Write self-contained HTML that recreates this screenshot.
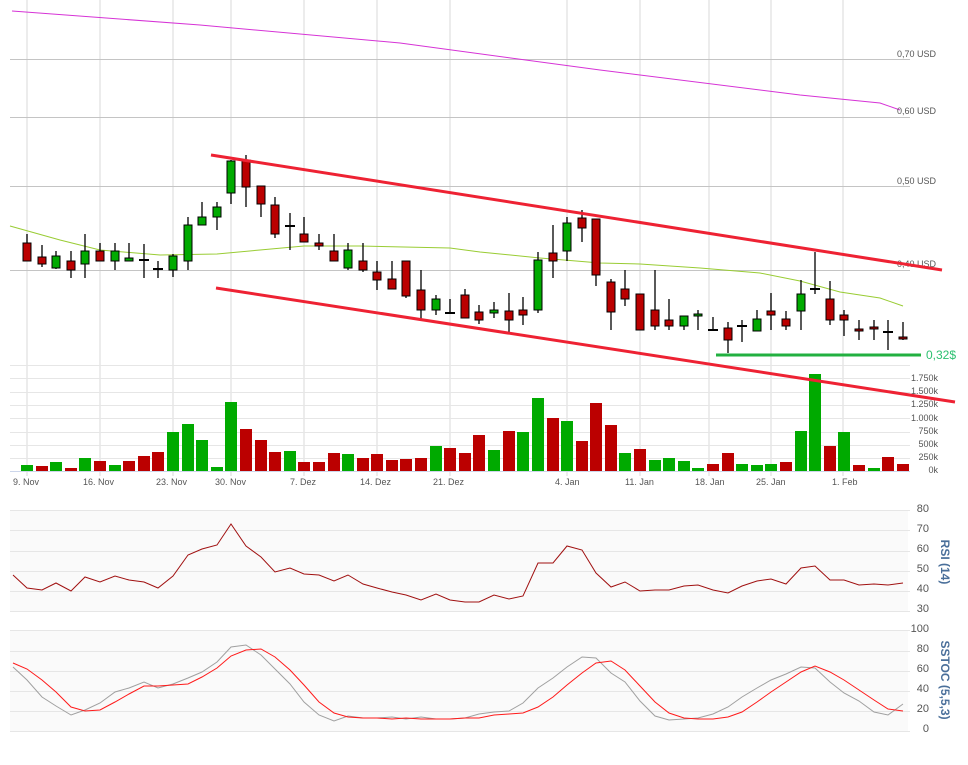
<!DOCTYPE html><html><head><meta charset="utf-8"><style>body{margin:0;background:#fff}svg{display:block;font-family:"Liberation Sans",sans-serif}</style></head><body>
<svg width="968" height="765" viewBox="0 0 968 765" xmlns="http://www.w3.org/2000/svg">
<rect width="968" height="765" fill="#fff"/>
<rect x="10" y="510" width="898" height="101" fill="#fafafa"/>
<rect x="10" y="630" width="898" height="101" fill="#fafafa"/>
<g stroke="#ececec" stroke-width="2">
<line x1="27" y1="0" x2="27" y2="476"/><line x1="100" y1="0" x2="100" y2="476"/><line x1="173" y1="0" x2="173" y2="476"/><line x1="231" y1="0" x2="231" y2="476"/><line x1="304" y1="0" x2="304" y2="476"/><line x1="377" y1="0" x2="377" y2="476"/><line x1="450" y1="0" x2="450" y2="476"/><line x1="567" y1="0" x2="567" y2="476"/><line x1="640" y1="0" x2="640" y2="476"/><line x1="709" y1="0" x2="709" y2="476"/><line x1="771" y1="0" x2="771" y2="476"/><line x1="843" y1="0" x2="843" y2="476"/>
</g>
<g stroke="#c4c4c4" stroke-width="1"><line x1="10" y1="59.5" x2="910" y2="59.5"/><line x1="10" y1="117.5" x2="910" y2="117.5"/><line x1="10" y1="186.5" x2="910" y2="186.5"/><line x1="10" y1="270.5" x2="910" y2="270.5"/></g>
<g stroke="#e6e6e6" stroke-width="1">
<line x1="10" y1="365.5" x2="910" y2="365.5"/><line x1="10" y1="378.5" x2="910" y2="378.5"/><line x1="10" y1="392.5" x2="910" y2="392.5"/><line x1="10" y1="405.5" x2="910" y2="405.5"/><line x1="10" y1="418.5" x2="910" y2="418.5"/><line x1="10" y1="432.5" x2="910" y2="432.5"/><line x1="10" y1="445.5" x2="910" y2="445.5"/><line x1="10" y1="458.5" x2="910" y2="458.5"/>
<line x1="10" y1="510.5" x2="910" y2="510.5"/><line x1="10" y1="530.5" x2="910" y2="530.5"/><line x1="10" y1="551.5" x2="910" y2="551.5"/><line x1="10" y1="571.5" x2="910" y2="571.5"/><line x1="10" y1="591.5" x2="910" y2="591.5"/><line x1="10" y1="611.5" x2="910" y2="611.5"/>
<line x1="10" y1="630.5" x2="910" y2="630.5"/><line x1="10" y1="651.5" x2="910" y2="651.5"/><line x1="10" y1="671.5" x2="910" y2="671.5"/><line x1="10" y1="691.5" x2="910" y2="691.5"/><line x1="10" y1="711.5" x2="910" y2="711.5"/><line x1="10" y1="731.5" x2="910" y2="731.5"/>
</g>
<line x1="10" y1="471.5" x2="910" y2="471.5" stroke="#ccd6eb"/>
<path d="M12 11 L200 25 L400 43 L600 70 L800 95 L880 103 L900 110" fill="none" stroke="#d633d6" stroke-width="1"/>
<g font-size="9" fill="#555"><text x="897" y="57">0,70 USD</text><text x="897" y="114">0,60 USD</text><text x="897" y="184">0,50 USD</text><text x="897" y="267">0,40 USD</text></g>
<path d="M10 226 L60 240 L100 250 L160 255 L217 254 L260 250 L304 246 L360 246 L450 248 L480 252 L540 258 L600 263 L640 264 L700 268 L760 273 L800 281 L840 292 L880 298 L903 306" fill="none" stroke="#9c3" stroke-width="1"/>
<!-- volume -->
<g fill="#00aa00"><rect x="21" y="465" width="12" height="6"/><rect x="50" y="462" width="12" height="9"/><rect x="79" y="458" width="12" height="13"/><rect x="109" y="465" width="12" height="6"/><rect x="167" y="432" width="12" height="39"/><rect x="182" y="424" width="12" height="47"/><rect x="196" y="440" width="12" height="31"/><rect x="211" y="467" width="12" height="4"/><rect x="225" y="402" width="12" height="69"/><rect x="284" y="451" width="12" height="20"/><rect x="342" y="454" width="12" height="17"/><rect x="430" y="446" width="12" height="25"/><rect x="488" y="450" width="12" height="21"/><rect x="517" y="432" width="12" height="39"/><rect x="532" y="398" width="12" height="73"/><rect x="561" y="421" width="12" height="50"/><rect x="619" y="453" width="12" height="18"/><rect x="649" y="460" width="12" height="11"/><rect x="663" y="458" width="12" height="13"/><rect x="678" y="461" width="12" height="10"/><rect x="692" y="468" width="12" height="3"/><rect x="736" y="464" width="12" height="7"/><rect x="751" y="465" width="12" height="6"/><rect x="765" y="464" width="12" height="7"/><rect x="795" y="431" width="12" height="40"/><rect x="809" y="374" width="12" height="97"/><rect x="838" y="432" width="12" height="39"/><rect x="868" y="468" width="12" height="3"/></g>
<g fill="#bb0000"><rect x="36" y="466" width="12" height="5"/><rect x="65" y="468" width="12" height="3"/><rect x="94" y="461" width="12" height="10"/><rect x="123" y="461" width="12" height="10"/><rect x="138" y="456" width="12" height="15"/><rect x="152" y="452" width="12" height="19"/><rect x="240" y="429" width="12" height="42"/><rect x="255" y="440" width="12" height="31"/><rect x="269" y="452" width="12" height="19"/><rect x="298" y="462" width="12" height="9"/><rect x="313" y="462" width="12" height="9"/><rect x="328" y="453" width="12" height="18"/><rect x="357" y="458" width="12" height="13"/><rect x="371" y="454" width="12" height="17"/><rect x="386" y="460" width="12" height="11"/><rect x="400" y="459" width="12" height="12"/><rect x="415" y="458" width="12" height="13"/><rect x="444" y="448" width="12" height="23"/><rect x="459" y="453" width="12" height="18"/><rect x="473" y="435" width="12" height="36"/><rect x="503" y="431" width="12" height="40"/><rect x="547" y="418" width="12" height="53"/><rect x="576" y="441" width="12" height="30"/><rect x="590" y="403" width="12" height="68"/><rect x="605" y="425" width="12" height="46"/><rect x="634" y="449" width="12" height="22"/><rect x="707" y="464" width="12" height="7"/><rect x="722" y="453" width="12" height="18"/><rect x="780" y="462" width="12" height="9"/><rect x="824" y="446" width="12" height="25"/><rect x="853" y="465" width="12" height="6"/><rect x="882" y="457" width="12" height="14"/><rect x="897" y="464" width="12" height="7"/></g>
<!-- wicks -->
<g stroke="#000" stroke-width="1.3">
<path d="M27 234V261M42 245V267M56 251V269M71 251V278M85 234V278M100 243V261M115 243V270M129 243V261M144 244V278M158 261V278M173 254V277M188 217V270M202 202V225M217 202V230M231 160V204M246 155V207M261 186V217M275 197V238M290 213V250M304 217V242M319 234V250M334 234V261M348 243V270M363 243V272M377 261V290M392 261V289M406 261V298M421 270V320M436 295V315M450 299V313M465 289V318M479 305V324M494 302V318M509 293V333M523 297V325M538 252V313M553 225V278M567 217V261M582 210V242M596 219V286M611 279V330M625 270V306M640 294V330M655 270V330M669 299V330M684 316V330M698 310V330M713 317V330M728 322V353M742 320V342M757 310V331M771 293V330M786 311V330M801 280V330M815 252V294M830 281V325M844 310V336M859 320V340M874 320V340M888 320V350M903 322V340"/>
<path stroke-width="2" d="M139 260H149M153 269H163M285 226H295M445 313H455M708 330H718M737 326H747M810 289H820M883 332H893"/>
</g>
<g stroke="#000" stroke-width="1">
<g fill="#bb0000"><rect x="23" y="243" width="8" height="18"/><rect x="38" y="257" width="8" height="7"/><rect x="67" y="261" width="8" height="9"/><rect x="96" y="251" width="8" height="10"/><rect x="242" y="160" width="8" height="27"/><rect x="257" y="186" width="8" height="18"/><rect x="271" y="205" width="8" height="29"/><rect x="300" y="234" width="8" height="8"/><rect x="315" y="243" width="8" height="3"/><rect x="330" y="251" width="8" height="10"/><rect x="359" y="261" width="8" height="9"/><rect x="373" y="272" width="8" height="8"/><rect x="388" y="279" width="8" height="10"/><rect x="402" y="261" width="8" height="35"/><rect x="417" y="290" width="8" height="20"/><rect x="461" y="295" width="8" height="23"/><rect x="475" y="312" width="8" height="8"/><rect x="505" y="311" width="8" height="9"/><rect x="519" y="310" width="8" height="5"/><rect x="549" y="253" width="8" height="8"/><rect x="578" y="218" width="8" height="10"/><rect x="592" y="219" width="8" height="56"/><rect x="607" y="282" width="8" height="30"/><rect x="621" y="289" width="8" height="10"/><rect x="636" y="294" width="8" height="36"/><rect x="651" y="310" width="8" height="16"/><rect x="665" y="320" width="8" height="6"/><rect x="724" y="328" width="8" height="12"/><rect x="767" y="311" width="8" height="4"/><rect x="782" y="319" width="8" height="7"/><rect x="826" y="299" width="8" height="21"/><rect x="840" y="315" width="8" height="5"/><rect x="855" y="329" width="8" height="2"/><rect x="870" y="327" width="8" height="2"/><rect x="899" y="337" width="8" height="2"/></g>
<g fill="#00aa00"><rect x="52" y="256" width="8" height="12"/><rect x="81" y="251" width="8" height="13"/><rect x="111" y="251" width="8" height="10"/><rect x="125" y="258" width="8" height="3"/><rect x="169" y="256" width="8" height="14"/><rect x="184" y="225" width="8" height="36"/><rect x="198" y="217" width="8" height="8"/><rect x="213" y="207" width="8" height="10"/><rect x="227" y="161" width="8" height="32"/><rect x="344" y="250" width="8" height="18"/><rect x="432" y="299" width="8" height="11"/><rect x="490" y="310" width="8" height="3"/><rect x="534" y="260" width="8" height="50"/><rect x="563" y="223" width="8" height="28"/><rect x="680" y="316" width="8" height="10"/><rect x="694" y="314" width="8" height="2"/><rect x="753" y="319" width="8" height="12"/><rect x="797" y="294" width="8" height="17"/></g>
</g>
<line x1="211" y1="155" x2="942" y2="270" stroke="#ee2233" stroke-width="3"/>
<line x1="216" y1="288" x2="955" y2="402" stroke="#ee2233" stroke-width="3"/>
<line x1="716" y1="355" x2="921" y2="355" stroke="#22b040" stroke-width="3"/>
<text x="926" y="359" font-size="12" fill="#2cc070">0,32$</text>
<g font-size="9" fill="#555" text-anchor="end"><text x="938" y="381">1.750k</text><text x="938" y="394">1.500k</text><text x="938" y="407">1.250k</text><text x="938" y="421">1.000k</text><text x="938" y="434">750k</text><text x="938" y="447">500k</text><text x="938" y="460">250k</text><text x="938" y="473">0k</text></g>
<g font-size="9" fill="#555"><text x="13" y="485">9. Nov</text><text x="83" y="485">16. Nov</text><text x="156" y="485">23. Nov</text><text x="215" y="485">30. Nov</text><text x="290" y="485">7. Dez</text><text x="360" y="485">14. Dez</text><text x="433" y="485">21. Dez</text><text x="555" y="485">4. Jan</text><text x="625" y="485">11. Jan</text><text x="695" y="485">18. Jan</text><text x="756" y="485">25. Jan</text><text x="832" y="485">1. Feb</text></g>
<polyline fill="none" stroke="#a01010" stroke-width="1" points="13,575 27,588 42,590 56,583 71,591 85,577 100,582 115,576 129,580 144,582 158,588 173,576 188,555 202,549 217,545 231,524 246,546 261,557 275,572 290,568 304,574 319,575 334,581 348,575 363,584 377,588 392,592 406,595 421,600 436,594 450,600 465,602 479,602 494,595 509,599 523,596 538,563 553,563 567,546 582,550 596,573 611,587 625,582 640,591 655,590 669,590 684,586 698,585 713,590 728,593 742,586 757,581 771,579 786,584 801,568 815,566 830,580 844,580 859,585 874,584 888,585 903,583"/>
<polyline fill="none" stroke="#a0a0a0" stroke-width="1" points="13,667 27,680 42,697 56,706 71,715 85,710 100,703 115,692 129,688 144,682 158,688 173,684 188,678 202,672 217,662 231,647 246,645 261,655 275,669 290,684 304,702 319,715 334,721 348,716 363,718 377,718 392,717 406,719 421,717 436,719 450,719 465,718 479,714 494,712 509,711 523,703 538,688 553,678 567,667 582,657 596,658 611,673 625,682 640,701 655,716 669,720 684,719 698,718 713,714 728,707 742,697 757,688 771,680 786,674 801,667 815,668 830,682 844,693 859,701 874,712 888,715 903,704"/>
<polyline fill="none" stroke="#ff1a1a" stroke-width="1" points="13,663 27,669 42,680 56,692 71,707 85,711 100,710 115,702 129,694 144,686 158,686 173,685 188,684 202,677 217,668 231,656 246,650 261,649 275,657 290,670 304,685 319,702 334,713 348,717 363,718 377,718 392,719 406,718 421,719 436,719 450,719 465,718 479,718 494,715 509,714 523,713 538,707 553,697 567,685 582,673 596,663 611,661 625,670 640,686 655,702 669,713 684,718 698,719 713,719 728,717 742,712 757,702 771,692 786,682 801,672 815,666 830,672 844,680 859,690 874,700 888,709 903,711"/>
<g font-size="11" fill="#555" text-anchor="end"><text x="929" y="512">80</text><text x="929" y="532">70</text><text x="929" y="552">60</text><text x="929" y="572">50</text><text x="929" y="592">40</text><text x="929" y="612">30</text><text x="929" y="632">100</text><text x="929" y="652">80</text><text x="929" y="672">60</text><text x="929" y="692">40</text><text x="929" y="712">20</text><text x="929" y="732">0</text></g>
<g font-size="12" font-weight="bold" fill="#4a6f9a" text-anchor="middle"><text transform="translate(941,562) rotate(90)">RSI (14)</text><text transform="translate(941,680) rotate(90)">SSTOC (5,5,3)</text></g>
</svg></body></html>
